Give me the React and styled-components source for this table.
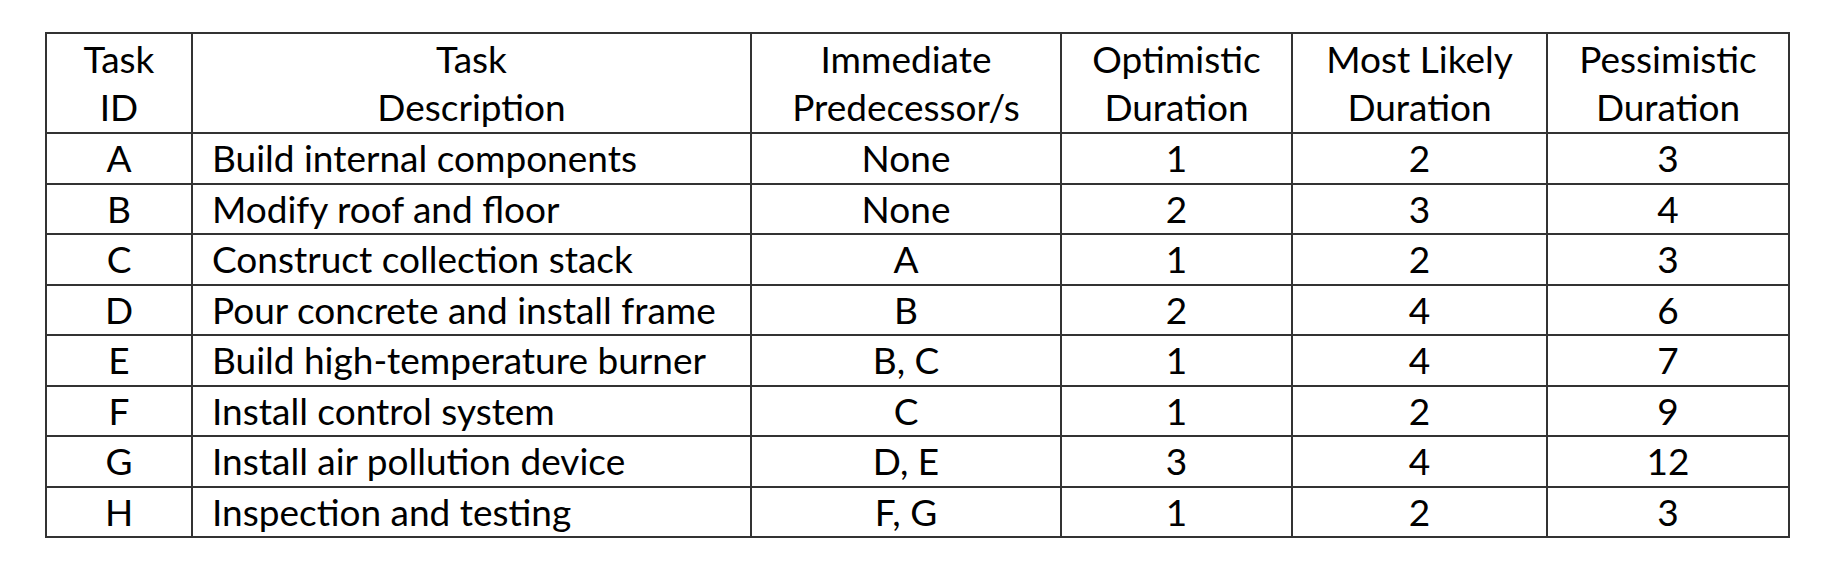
import React from "react";
import styled, { createGlobalStyle } from "styled-components";

const Global = createGlobalStyle`
  html, body { margin: 0; padding: 0; background: #fff; }
  body { font-family: Lato, "Open Sans", sans-serif; color: #000; }
`;

const Page = styled.div`
  padding: 32px 0 0 45px;
`;

const Table = styled.table`
  border-collapse: collapse;
  table-layout: fixed;
  width: 1743px;
  font-family: Lato, sans-serif;
  font-size: 37px;
`;

const Col = styled.col`
  width: ${(p) => p.$w}px;
`;

const Th = styled.th`
  font-weight: 400;
  border: 2px solid #333;
  height: 98px;
  line-height: 48px;
  padding: 0;
  vertical-align: middle;
  text-align: center;
  white-space: nowrap;
`;

const Row = styled.tr`
  height: 50.5px;
`;

const Td = styled.td`
  border: 2px solid #333;
  padding: 0 0 0 ${(p) => (p.$left ? "19px" : "0")};
  text-align: ${(p) => (p.$left ? "left" : "center")};
  vertical-align: middle;
  line-height: 40px;
  white-space: nowrap;
`;

const cols = [146, 559, 310, 231, 255, 242];

const headers = [
  ["Task", "ID"],
  ["Task", "Description"],
  ["Immediate", "Predecessor/s"],
  ["Optimistic", "Duration"],
  ["Most Likely", "Duration"],
  ["Pessimistic", "Duration"],
];

const rows = [
  ["A", "Build internal components", "None", 1, 2, 3],
  ["B", "Modify roof and floor", "None", 2, 3, 4],
  ["C", "Construct collection stack", "A", 1, 2, 3],
  ["D", "Pour concrete and install frame", "B", 2, 4, 6],
  ["E", "Build high-temperature burner", "B, C", 1, 4, 7],
  ["F", "Install control system", "C", 1, 2, 9],
  ["G", "Install air pollution device", "D, E", 3, 4, 12],
  ["H", "Inspection and testing", "F, G", 1, 2, 3],
];

export default function App() {
  return (
    <Page>
      <Global />
      <Table>
        <colgroup>
          {cols.map((w, i) => (
            <Col key={i} $w={w} />
          ))}
        </colgroup>
        <thead>
          <tr>
            {headers.map((h, i) => (
              <Th key={i}>
                {h[0]}
                <br />
                {h[1]}
              </Th>
            ))}
          </tr>
        </thead>
        <tbody>
          {rows.map((r) => (
            <Row key={r[0]}>
              {r.map((c, i) => (
                <Td key={i} $left={i === 1}>
                  {c}
                </Td>
              ))}
            </Row>
          ))}
        </tbody>
      </Table>
    </Page>
  );
}
